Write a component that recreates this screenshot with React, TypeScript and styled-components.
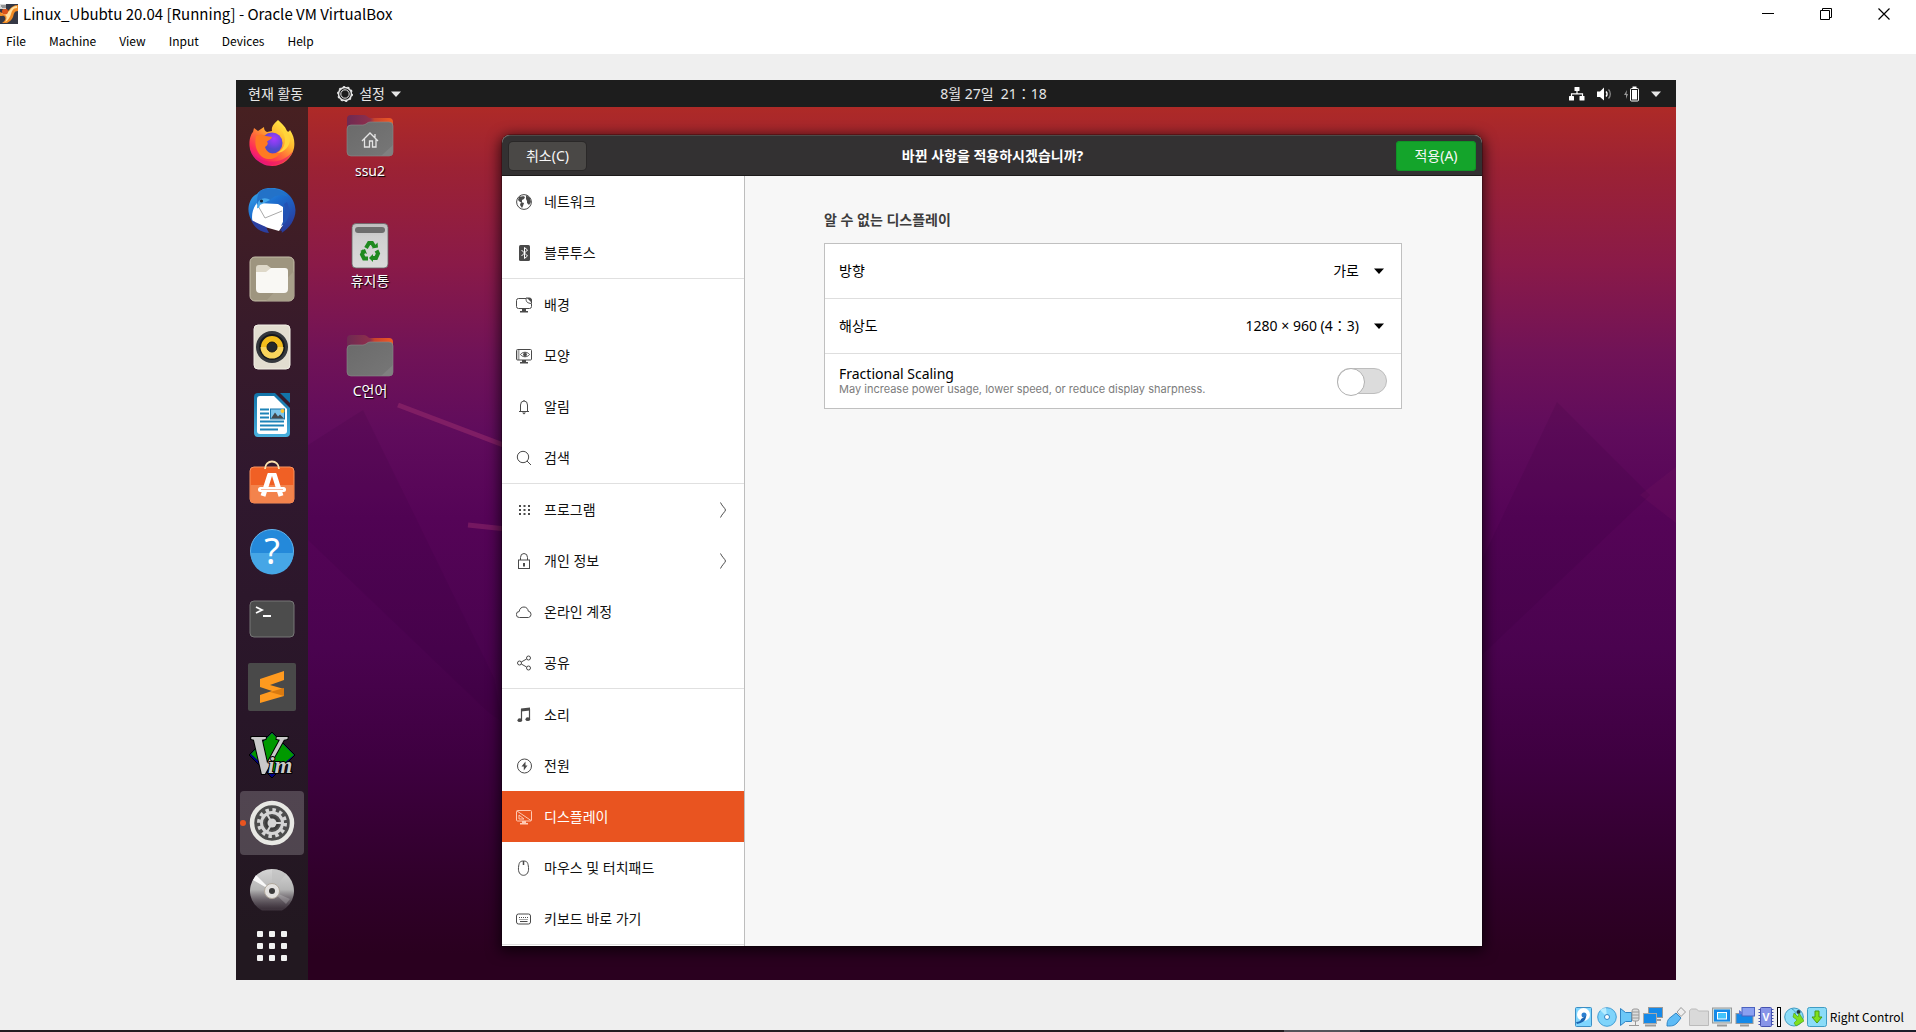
import React from "react";
import styled, { createGlobalStyle } from "styled-components";

const windowsFont = `"Noto Sans CJK KR", "Noto Sans", sans-serif`;
const guestFont = `"Noto Sans", "Noto Sans CJK KR", sans-serif`;

const GlobalStyle = createGlobalStyle`
  * { box-sizing: border-box; }
  body { margin: 0; background: #efefef; }
  button, select, input { font: inherit; color: inherit; margin: 0; }
  button { border: 0; padding: 0; background: none; }
  ul { list-style: none; margin: 0; padding: 0; }
  svg { display: block; flex: none; }
`;

/* ---------- host window ---------- */

const HostWindow = styled.div`
  min-height: 100vh;
  display: flex;
  flex-direction: column;
  background: #efefef;
  font-family: ${windowsFont};
  color: #000;
`;

const TitleBar = styled.header`
  display: flex;
  align-items: center;
  height: 28px;
  padding-right: 3px;
  background: #fff;
`;

const HostTitle = styled.h1`
  flex: 1;
  margin: 0;
  padding-left: 5px;
  font-size: 15px;
  line-height: 20px;
  font-weight: 400;
`;

const HostControl = styled.button`
  display: grid;
  place-items: center;
  width: 58px;
  height: 28px;
`;

const MenuBar = styled.nav`
  display: flex;
  align-items: center;
  gap: 23px;
  height: 26px;
  padding-left: 6px;
  background: #fff;
`;

const MenuButton = styled.button`
  font-size: 12px;
  line-height: 20px;
`;

const Viewport = styled.main`
  flex: 1;
  display: flex;
  padding: 26px 240px 24px 236px;
`;

const StatusBar = styled.footer`
  display: flex;
  align-items: center;
  justify-content: flex-end;
  gap: 3px;
  height: 26px;
  padding-right: 12px;
  font-size: 12px;
  line-height: 20px;
`;

const StatusSeparator = styled.span`
  width: 4px;
  height: 20px;
  border: 1px solid #000;
  background: #fff;
`;

const TaskbarEdge = styled.div`
  height: 2px;
  background: linear-gradient(90deg, #231d20 0 67%, #55535a 67% 71%, #1e1e2a 71%);
`;

/* ---------- guest desktop ---------- */

const Guest = styled.section`
  flex: 1;
  display: flex;
  flex-direction: column;
  min-width: 0;
  font-family: ${guestFont};
  font-size: 14px;
  line-height: 20px;
`;

const TopBar = styled.div`
  display: grid;
  grid-template-columns: 1fr auto 1fr;
  align-items: center;
  height: 27px;
  padding: 0 15px 0 12px;
  background: #1d1d1d;
  color: #e6e6e6;
`;

const TopGroup = styled.div<{ $end?: boolean }>`
  display: flex;
  align-items: center;
  gap: ${(p) => (p.$end ? "12px" : "34px")};
  justify-content: ${(p) => (p.$end ? "flex-end" : "flex-start")};
`;

const TopButton = styled.button`
  display: flex;
  align-items: center;
  gap: 6px;
`;

const Clock = styled.time`
  padding-left: 78px;
  white-space: pre;
`;

const Workspace = styled.div`
  position: relative;
  flex: 1;
  display: flex;
  background: linear-gradient(
    #ae2a27 0%, #9c2234 7%, #8a1a48 18%, #711357 28%, #600c5c 37%,
    #550457 47%, #4a034f 62%, #3e0040 75%, #30002a 89%, #2a001f 97%
  );
`;

const Wallpaper = styled.svg`
  position: absolute;
  inset: 0;
  width: 100%;
  height: 100%;
`;

const Dock = styled.nav`
  position: relative;
  display: flex;
  flex-direction: column;
  align-items: center;
  width: 72px;
  padding-top: 2px;
  background: linear-gradient(#472021 0%, #381b2a 25%, #30182e 42%, #281628 70%, #221820 95%);
`;

const DockSlot = styled.button<{ $short?: boolean }>`
  display: grid;
  place-items: center;
  width: 72px;
  height: ${(p) => (p.$short ? "42px" : "68px")};
`;

const DockTile = styled.span<{ $active?: boolean }>`
  position: relative;
  display: grid;
  place-items: center;
  width: 64px;
  height: 64px;
  border-radius: 4px;
  background: ${(p) => (p.$active ? "rgba(255, 255, 255, 0.2)" : "none")};
  &::before {
    content: "";
    display: ${(p) => (p.$active ? "block" : "none")};
    position: absolute;
    left: 0;
    width: 6px;
    height: 6px;
    border-radius: 50%;
    background: #e95420;
  }
`;

const DesktopIcons = styled.ul`
  position: relative;
  display: flex;
  flex-direction: column;
  gap: 40px;
  width: 124px;
  padding-top: 5px;
`;

const DesktopIcon = styled.li`
  display: flex;
  flex-direction: column;
  align-items: center;
  line-height: 22px;
  color: #fff;
  text-shadow: 1px 1px 1px #000;
`;

/* ---------- settings window ---------- */

const SettingsWindow = styled.section`
  position: absolute;
  inset: 28px 194px 34px 266px;
  display: flex;
  flex-direction: column;
  border-radius: 8px 8px 0 0;
  box-shadow: 0 3px 14px 2px rgba(0, 0, 0, 0.7), 0 0 0 1px rgba(0, 0, 0, 0.25);
  background: #f7f7f7;
`;

const SettingsHeader = styled.header`
  display: grid;
  grid-template-columns: 1fr auto 1fr;
  align-items: center;
  height: 41px;
  padding: 0 6px 0 7px;
  border-top: 1px solid #4c4a48;
  border-bottom: 1px solid #1c1a1a;
  border-radius: 8px 8px 0 0;
  background: #333132;
`;

const SettingsTitle = styled.h2`
  margin: 0;
  font-size: 14px;
  line-height: 20px;
  font-weight: 700;
  color: #fff;
`;

const HeaderButton = styled.button<{ $primary?: boolean }>`
  justify-self: ${(p) => (p.$primary ? "end" : "start")};
  height: ${(p) => (p.$primary ? "30px" : "28px")};
  min-width: ${(p) => (p.$primary ? "80px" : "77px")};
  padding: 0 12px;
  border-radius: 4px;
  color: #f7f7f7;
  background: ${(p) => (p.$primary ? "#14a42b" : "#4a4846")};
  box-shadow: ${(p) => (p.$primary ? "inset 0 0 0 1px #0f9426" : "0 0 0 1px #2a2828")};
`;

const SettingsBody = styled.div`
  flex: 1;
  display: grid;
  grid-template-columns: 243px 1fr;
`;

const Sidebar = styled.nav`
  border-right: 1px solid #bdbdbd;
  background: #fff;
`;

const SideGroup = styled.ul`
  border-bottom: 1px solid #e0e0e0;
`;

const SideItem = styled.button<{ $selected?: boolean }>`
  display: flex;
  align-items: center;
  gap: 12px;
  width: 100%;
  height: 51px;
  padding: 0 17px 0 14px;
  text-align: left;
  color: ${(p) => (p.$selected ? "#fff" : "#111")};
  background: ${(p) => (p.$selected ? "#e95420" : "#fff")};
  svg { color: ${(p) => (p.$selected ? "#ffc9b3" : "#4a4a4a")}; }
`;

const SideLabel = styled.span`
  flex: 1;
`;

const Content = styled.div`
  padding: 34px 80px 34px 79px;
`;

const SectionTitle = styled.h3`
  margin: 0 0 13px;
  font-size: 14px;
  line-height: 20px;
  font-weight: 700;
  color: #3d3d3d;
`;

const Panel = styled.div`
  border: 1px solid #c0c0c0;
  background: #fff;
`;

const PanelRow = styled.div`
  display: flex;
  align-items: center;
  justify-content: space-between;
  height: 55px;
  padding: 0 14px;
  color: #000;
  border-bottom: 1px solid #dedede;
  &:last-child {
    height: 54px;
    border-bottom: 0;
  }
`;

const SelectBox = styled.span`
  display: flex;
  align-items: center;
  gap: 15px;
  padding-right: 3px;
`;

const Select = styled.select`
  appearance: none;
  field-sizing: content;
  border: 0;
  padding: 0;
  background: none;
  text-align: right;
`;

const RowLabel = styled.label`
  display: flex;
  flex-direction: column;
  line-height: 16px;
`;

const Hint = styled.small`
  font-family: Inter, "Noto Sans", sans-serif;
  font-size: 11px;
  line-height: 14px;
  color: #7c7c7c;
`;

const Switch = styled.input`
  appearance: none;
  width: 50px;
  height: 26px;
  border: 1px solid #bdbdbd;
  border-radius: 13px;
  background: #dcdcdc;
  &::before {
    content: "";
    display: block;
    width: 26px;
    height: 26px;
    margin: -1px;
    border: 1px solid #b0b0b0;
    border-radius: 50%;
    background: #fff;
  }
  &:checked { background: #14a42b; }
  &:checked::before { margin-left: 23px; }
`;

/* ---------- drawings ---------- */

const Caret = ({ size = 10 }: { size?: number }) => (
  <svg width={size} height="6" viewBox="0 0 10 6"><path d="M0 0.5h10L5 6z" fill="currentColor" /></svg>
);

const VBoxLogo = () => (
  <svg width="18" height="20" viewBox="0 0 18 20">
    <rect width="18" height="20" fill="#353845" />
    <path d="M0 8c3 2 7 1 9-2s5-5 9-5v6c-4 0-4 3-5 6s-4 5-6 6H2c3-2 4-4 3-6S2 12 0 12z" fill="#f08a24" />
    <path d="M1 9c4 1 7 0 9-3s4-4 7-4v2c-4 0-5 3-6 6s-3 7-6 8c2-3 2-6 0-7z" fill="#ffe0a0" />
    <circle cx="5" cy="7.500" r="3" fill="#d9541c" />
    <rect width="6" height="5" fill="#d8d8d8" />
    <path d="M1 2h1M3 1v3M5 1v3" stroke="#555" />
  </svg>
);

const GearOutline = () => (
  <svg width="16" height="16" viewBox="0 0 16 16" fill="none" stroke="#e6e6e6">
    <circle cx="8" cy="8" r="6.500" strokeWidth="1.500" />
    <circle cx="8" cy="8" r="4.200" />
    <circle cx="8" cy="8" r="7.300" strokeDasharray="2 2.587" strokeWidth="1.400" />
  </svg>
);

const NetworkTray = () => (
  <svg width="16" height="14" viewBox="0 0 16 14" fill="#fff">
    <rect x="5.500" y="0" width="5" height="4" rx="0.500" />
    <rect x="0" y="9" width="5" height="4.500" rx="0.500" />
    <rect x="10.500" y="9" width="5" height="4.500" rx="0.500" />
    <path d="M8 4v3M2.500 9.500V6.800h11v2.700" fill="none" stroke="#fff" strokeWidth="1.200" />
  </svg>
);

const VolumeTray = () => (
  <svg width="15" height="14" viewBox="0 0 15 14">
    <path d="M0 4.500h3L7 0.500v13L3 10H0z" fill="#fff" />
    <path d="M9 4.500a3.500 3.500 0 0 1 0 5" fill="none" stroke="#fff" strokeWidth="1.400" />
    <path d="M11.500 2.500a6.500 6.500 0 0 1 0 9" fill="none" stroke="#888" strokeWidth="1.300" />
  </svg>
);

const BatteryTray = () => (
  <svg width="15" height="16" viewBox="0 0 15 16">
    <path d="M3 4L0 9h2v4l2-5H2.500z" fill="#999" />
    <rect x="6.500" y="2.500" width="8" height="12.500" rx="1" fill="none" stroke="#fff" />
    <rect x="8.500" y="0.500" width="4" height="2" fill="#fff" />
    <rect x="8" y="4" width="5" height="9.500" fill="#fff" />
  </svg>
);

const Folder = ({ home = false }: { home?: boolean }) => (
  <svg width="48" height="48" viewBox="0 0 48 48">
    <defs>
      <linearGradient id="tab"><stop offset="0" stopColor="#6e2a52" /><stop offset="0.500" stopColor="#8e2f4c" /><stop offset="0.600" stopColor="#c7432e" /><stop offset="1" stopColor="#f05a24" /></linearGradient>
      <linearGradient id="front" x2="1" y2="1"><stop offset="0" stopColor="#6a6a6a" /><stop offset="1" stopColor="#777" /></linearGradient>
    </defs>
    <path d="M1 7a4 4 0 0 1 4-4h13c3 0 4 3 6 3h19a4 4 0 0 1 4 4v20H1z" fill="url(#tab)" />
    <path d="M1 17a4 4 0 0 1 4-4h12c3 0 4-3 7-3h19a4 4 0 0 1 4 4v26a4 4 0 0 1-4 4H5a4 4 0 0 1-4-4z" fill="url(#front)" stroke="#8c8c8c" strokeWidth="0.600" />
    <path d="M47 33v7a4 4 0 0 1-4 4H35z" fill="#808080" />
    {home && <path d="M16 29l8-8 8 8M18.500 27v8h5v-6h3v6h3.500v-8M29 22v4" fill="none" stroke="#e4e4e4" strokeWidth="1.300" />}
  </svg>
);

const Trash = () => (
  <svg width="48" height="48" viewBox="0 0 48 48">
    <defs><linearGradient id="bin" x2="0" y2="1"><stop offset="0" stopColor="#bdbdbd" /><stop offset="0.300" stopColor="#d0d0d0" /><stop offset="1" stopColor="#dadada" /></linearGradient></defs>
    <rect x="6" y="1.500" width="36" height="44.500" rx="4" fill="url(#bin)" stroke="#666" strokeWidth="0.800" />
    <rect x="9" y="5" width="30" height="6" rx="3" fill="#6e6e6e" />
    <g fill="none" stroke="#1f8a1f" strokeWidth="4">
      <path d="M20 26l3-5h3l2.500 4" />
      <path d="M30.500 28.500l1.500 3-2 4.500h-4" />
      <path d="M22 36.500h-4l-2-4 2-4" />
    </g>
    <path d="M26 26.500l6-1-.5-5zM27 32v8l-4-4zM14 29l5-2 2 5z" fill="#1f8a1f" />
  </svg>
);

const Firefox = () => (
  <svg width="48" height="48" viewBox="0 0 48 48">
    <defs>
      <linearGradient id="ff" x1="0.900" y1="0.100" x2="0.250" y2="0.950"><stop offset="0" stopColor="#fff14a" /><stop offset="0.350" stopColor="#ffb52e" /><stop offset="0.600" stopColor="#ff6a3a" /><stop offset="0.850" stopColor="#ff2b58" /><stop offset="1" stopColor="#e31587" /></linearGradient>
      <radialGradient id="ffc" cx="0.600" cy="0.300"><stop offset="0" stopColor="#a63bff" /><stop offset="0.600" stopColor="#7542e5" /><stop offset="1" stopColor="#4f4ac8" /></radialGradient>
    </defs>
    <path d="M30 1c3 3 7 6 9 11 1 1 2 1 3-1 4 6 5 12 4 18-2 10-11 18-22 18S2 38 1.500 27C1 20 3 15 5 13l1-4 4 3 6-4c0 3 1 4 3 5l5-1c-1-5 3-8 6-11z" fill="url(#ff)" />
    <circle cx="24" cy="24" r="10.500" fill="url(#ffc)" />
    <path d="M8 17c4-2 7-2 10 0l6 1c-1 3-4 3-5 5 2 1 0 4-2 5 2 7 10 9 16 4-3 9-17 12-23 1-3-5-3-11-2-16z" fill="#ff7a22" />
    <path d="M29 4c1 5 8 8 8 17 0 7-4 11-8 13 8-1 13-7 13-14-1-7-9-10-13-16z" fill="#ffd43a" />
    <path d="M3 32c6 12 31 16 42 0-4 9-12 14-21 14S7 41 3 32z" fill="#e8186d" opacity="0.600" />
  </svg>
);

const Thunderbird = () => (
  <svg width="48" height="48" viewBox="0 0 48 48">
    <defs><linearGradient id="tb" x2="0.700" y2="1"><stop offset="0" stopColor="#3fb0ee" /><stop offset="0.450" stopColor="#1c6fd0" /><stop offset="1" stopColor="#283a9c" /></linearGradient></defs>
    <path d="M22 1c15-1 25 10 25.500 22 0 10-6 18-14 23 1-2 0-3-2-2l3-4L8 38c-5-4-8-10-7.500-17C1 15 4 9 9 7c3-4 8-6 13-6z" fill="url(#tb)" />
    <path d="M9 16c-5 6-6 15-4 19 3 2 4 0 5 3l21 6 4-6V20l-5-3z" fill="#fff" />
    <path d="M9 17l8 14 17-7" fill="none" stroke="#aaa" />
    <path d="M12 4c8-5 22-3 28 6-6-3-14-2-18 3-4 0-9 1-13 5 0-5 0-10 3-14z" fill="#2372c8" />
    <path d="M10 15c4-5 9-4 12-2l-10 5c-1 4-3 4-3 2z" fill="#45a8ec" />
    <path d="M36 17c3 7 1 15-3 22 9-5 10-15 6-24z" fill="#2352b4" />
    <path d="M3 33c4 9 10 12 18 13l-3-6z" fill="#2b3fa0" />
    <circle cx="13.500" cy="14" r="1.600" fill="#123" />
  </svg>
);

const Files = () => (
  <svg width="48" height="48" viewBox="0 0 48 48">
    <rect x="2" y="2" width="44" height="44" rx="5" fill="#9e957f" stroke="#c4bda8" />
    <path d="M46 16v25a5 5 0 0 1-5 5H18z" fill="#a8a08a" />
    <path d="M8 13a3 3 0 0 1 3-3h8l4 3v8H8z" fill="#ded8c8" />
    <path d="M8 17h10l5-4h14a3 3 0 0 1 3 3v18a4 4 0 0 1-4 4H12a4 4 0 0 1-4-4z" fill="#f9f8f4" />
  </svg>
);

const Rhythmbox = () => (
  <svg width="48" height="48" viewBox="0 0 48 48">
    <rect x="6" y="2" width="36" height="44" rx="4" fill="#e2ddd0" stroke="#f2efe6" />
    <circle cx="24" cy="24" r="16" fill="#34373c" />
    <circle cx="24" cy="24" r="12" fill="#f3bd1c" stroke="#17191c" strokeWidth="2" />
    <path d="M12.500 24a11.500 11.500 0 0 0 23 0z" fill="#f8d45c" />
    <circle cx="24" cy="24" r="5" fill="#24272b" stroke="#141414" />
  </svg>
);

const Writer = () => (
  <svg width="48" height="48" viewBox="0 0 48 48">
    <defs><linearGradient id="lo" x2="0" y2="1"><stop offset="0" stopColor="#1273a8" /><stop offset="1" stopColor="#48b0dd" /></linearGradient></defs>
    <path d="M6 6a4 4 0 0 1 4-4h17l15 15v25a4 4 0 0 1-4 4H10a4 4 0 0 1-4-4z" fill="url(#lo)" />
    <path d="M32 2h10v10z" fill="#1273a8" />
    <path d="M9 8a3 3 0 0 1 3-3h14l13 13v22a3 3 0 0 1-3 3H12a3 3 0 0 1-3-3z" fill="#fff" />
    <path d="M12 18.500h9M12 22.500h9M12 26.500h9M12 30.500h24M12 34.500h24M12 38.500h18" stroke="#1d83b8" strokeWidth="1.800" />
    <rect x="22.500" y="18" width="14" height="10" fill="#7dc4ea" stroke="#1b78ae" />
    <path d="M23 27.500l4-6 3 4 2-2 4 4z" fill="#44484c" /><circle cx="34.500" cy="20" r="2" fill="#ffc52d" />
  </svg>
);

const Software = () => (
  <svg width="48" height="48" viewBox="0 0 48 48">
    <rect x="2" y="8" width="44" height="36" rx="4" fill="#f06025" stroke="#f9925f" />
    <path d="M2.500 26h43v14a4 4 0 0 1-4 4h-35a4 4 0 0 1-4-4z" fill="#f3834c" />
    <path d="M17 10c0-10 14-10 14 0" fill="none" stroke="#fbe2ad" strokeWidth="1.800" />
    <path d="M22 15L15 37M26 15l7 22" stroke="#fff" strokeWidth="5" />
    <path d="M20 15h8" stroke="#fff" strokeWidth="2" />
    <path d="M12.500 30.500h23" stroke="#fff" strokeWidth="5" strokeLinecap="round" />
    <path d="M13 30.500h22" stroke="#f6b9a0" strokeWidth="1" />
  </svg>
);

const HelpIcon = () => (
  <svg width="48" height="48" viewBox="0 0 48 48">
    <circle cx="24" cy="24" r="21.500" fill="#2489da" stroke="#63b4ee" />
    <path d="M2.500 26h43a21.500 21.500 0 0 1-43 0z" fill="#46a6e6" />
    <text x="24" y="37" textAnchor="middle" fontSize="36" fontFamily="Noto Sans, sans-serif" fill="#fff">?</text>
  </svg>
);

const Terminal = () => (
  <svg width="48" height="48" viewBox="0 0 48 48">
    <rect x="2" y="6" width="44" height="36" rx="4" fill="#4c4c4c" stroke="#777" />
    <path d="M8 12l6 3-6 3M15 21h8" fill="none" stroke="#fff" strokeWidth="1.800" />
  </svg>
);

const Sublime = () => (
  <svg width="48" height="48" viewBox="0 0 48 48">
    <rect width="48" height="48" rx="2" fill="#494949" />
    <path d="M12 16l24-8v9l-14 5 14 4v7l-24 7v-8l12-4-12-4z" fill="#ff9a1f" />
    <path d="M22 29l14-4v8z" fill="#d97a10" />
  </svg>
);

const Vim = () => (
  <svg width="48" height="48" viewBox="0 0 48 48">
    <path d="M24 1l23 23-23 23L1 24z" fill="#000080" stroke="#000" />
    <path d="M24 2l22 22-22 18L3 23z" fill="#009900" />
    <text x="0" y="42" fontFamily="Liberation Serif, serif" fontWeight="700" fontStyle="italic" fontSize="54" fill="#c9c9c9" stroke="#000" strokeWidth="2" paintOrder="stroke">
      V<tspan dx="-16" fontSize="23">im</tspan>
    </text>
  </svg>
);

const SettingsGear = () => (
  <svg width="48" height="48" viewBox="0 0 48 48">
    <circle cx="24" cy="24" r="20" fill="#4d4d4d" stroke="#e8e8e4" strokeWidth="4.500" />
    <circle cx="24" cy="24" r="13" fill="none" stroke="#d5d5d5" strokeWidth="4" strokeDasharray="3.400 3.407" />
    <circle cx="24" cy="24" r="10.500" fill="#4d4d4d" stroke="#d5d5d5" strokeWidth="3" />
    <circle cx="24" cy="24" r="5.500" fill="none" stroke="#3c3c3c" strokeWidth="3" />
    <circle cx="24" cy="24" r="4.500" fill="#d5d5d5" />
    <path d="M24 24h10M24 24l-5-9M24 24l-5 9" stroke="#d5d5d5" strokeWidth="2" />
  </svg>
);

const Disc = () => (
  <svg width="48" height="48" viewBox="0 0 48 48">
    <defs>
      <linearGradient id="cd" x2="0" y2="1"><stop offset="0" stopColor="#d6d6d6" /><stop offset="0.500" stopColor="#b4b4b4" /><stop offset="0.950" stopColor="#5a505a" stopOpacity="0.500" /></linearGradient>
    </defs>
    <path d="M14 43.500A22 22 0 1 1 34 43.500z" fill="url(#cd)" />
    <path d="M24 24L5 13l3-5z" fill="#fff" opacity="0.900" /><path d="M24 24l18 8-4 5z" fill="#fff" opacity="0.200" />
    <path d="M24 24V2a22 22 0 0 1 14 5z" fill="#bbb" opacity="0.500" />
    <circle cx="24" cy="24" r="7.500" fill="#e4e2e0" stroke="#b0a89c" />
    <circle cx="24" cy="24" r="3" fill="#3b3b3b" />
  </svg>
);

const AppGrid = () => (
  <svg width="30" height="30" viewBox="0 0 30 30" fill="#f2f2f2">
    {[0, 12, 24].map((y) => [0, 12, 24].map((x) => <rect key={`${x}-${y}`} x={x} y={y} width="6" height="6" rx="1" />))}
  </svg>
);

const sideDrawings: Record<string, React.ReactNode> = {
  globe: <><circle cx="8" cy="8" r="7.400" /><path d="M3 3c2-1 3 0 4-1l2 1-1 2-2 1v2H4L2 6zM5 8l3 1-1 3-1 2-2-3zM10 1l4 3 1 4-2 3-2-2V7l-1-2z" fill="currentColor" stroke="none" /></>,
  bluetooth: <><rect x="3" y="0" width="11" height="16" rx="1.500" fill="currentColor" stroke="none" /><path d="M5.500 5l6 6-3 2.500v-11l3 2.500-6 6" stroke="#fff" /></>,
  background: <><path d="M10 1.500H2.500a2 2 0 0 0-2 2v6a2 2 0 0 0 2 2h11a2 2 0 0 0 2-2V7" /><path d="M10 1c0 4 1 5 5.500 5.500V3a2 2 0 0 0-2-2z" /><path d="M11 1l4.500 4.500V3a2 2 0 0 0-2-2zM6 12h4v2h2v1.500H4V14h2z" fill="currentColor" stroke="none" /></>,
  look: <><rect x="0.500" y="1.500" width="15" height="10.500" rx="1" /><path d="M1.500 3h2M1.500 5h2M1.500 7h2M1.500 9h2M1.500 11h2" strokeWidth="1.200" /><path d="M4.500 6.500c2-3 7-3 9 0-2 3-7 3-9 0z" /><circle cx="9" cy="6.500" r="1.500" fill="currentColor" /><path d="M6 12h4v2h2v1.500H4V14h2z" fill="currentColor" stroke="none" /></>,
  bell: <><path d="M4.500 12V6a3.500 4 0 0 1 7 0v6M3 12.500h10M8 2V1" /><path d="M6 13.500h4l-2 2z" fill="currentColor" stroke="none" /></>,
  search: <><circle cx="7" cy="7" r="5.700" /><path d="M11 11l4 4" /></>,
  apps: <g fill="currentColor" stroke="none">{[3, 7, 11].map((y) => [3, 7.500, 12].map((x) => <rect key={`${x}-${y}`} x={x} y={y} width="2" height="2" />))}</g>,
  lock: <><path d="M4.500 7V4.500a3.500 4 0 0 1 7 0V7" /><rect x="2.500" y="7" width="11" height="8.500" /><path d="M8 10v3.500" strokeWidth="2" /></>,
  cloud: <path d="M3.500 13.500a3 3 0 0 1-.3-6C3.500 4.500 5.500 3 8 3s4 2 4.300 4.200A3.200 3.200 0 0 1 12.500 13.500z" />,
  share: <><circle cx="3.500" cy="8" r="2" /><circle cx="12.500" cy="3" r="2" /><circle cx="12.500" cy="13" r="2" /><path d="M5.300 7l5.300-3M5.300 9l5.300 3" /></>,
  music: <><path d="M5.500 13V2.500h8V12" strokeWidth="1.200" /><path d="M5 1.500L14 0.500v3L5 4.500z" fill="currentColor" stroke="none" /><ellipse cx="3.800" cy="13.200" rx="2.300" ry="1.900" fill="currentColor" stroke="none" /><ellipse cx="11.800" cy="12.200" rx="2.300" ry="1.900" fill="currentColor" stroke="none" /></>,
  power: <><circle cx="8.500" cy="8" r="7" /><path d="M9.500 3.500L5.500 8.500h2.300v4l3.700-5H9.500z" fill="currentColor" stroke="none" /></>,
  display: <><rect x="0.500" y="1.500" width="15" height="10.500" rx="1" /><path d="M1 2l14 9.500M3 6v4h5z" /><path d="M6 12h4v2h2v1.500H4V14h2z" fill="currentColor" stroke="none" /></>,
  mouse: <><path d="M7.500 1C3.500 1 3 3 2.500 7.500S4 15.300 7.500 15.300 13 12 12.500 7.500 11.500 1 7.500 1z" /><path d="M7.500 1v4" strokeWidth="1.500" /></>,
  keyboard: <><rect x="0.500" y="3" width="14" height="10" rx="2" /><path d="M3 6.500h9.500M3.500 8.500H12" strokeDasharray="1 1" /><path d="M4 10.500h7.500" /></>,
};

const SideIcon = ({ name }: { name: string }) => (
  <svg width="16" height="16" viewBox="0 0 16 16" fill="none" stroke="currentColor" strokeWidth="1">{sideDrawings[name]}</svg>
);

const Chevron = () => (
  <svg width="8" height="16" viewBox="0 0 8 16" fill="none" stroke="currentColor" strokeWidth="1"><path d="M1.500 0.500C3 4 6 6 6.500 8 6 10 3 12 1.500 15.500" /></svg>
);

/* ---------- status bar drawings ---------- */

const statusDrawings: { name: string; width?: number; art: React.ReactNode }[] = [
  { name: "Hard disks", art: <><rect x="1.500" y="0.500" width="16" height="19" rx="1" fill="#7fd6ff" stroke="#3c8ec4" /><circle cx="9.500" cy="7.500" r="6.500" fill="#fff" /><circle cx="10" cy="8" r="2.500" fill="#2b7fd0" /><path d="M12 9c0 5-4 7-9 8l-1-2c3 0 5-1 5-3" fill="#1c64b0" /></> },
  { name: "Optical drives", art: <><circle cx="10" cy="10" r="9.300" fill="#7fd4fb" stroke="#3f9cd4" /><path d="M10 10L3 3a10 10 0 0 1 6-2z" fill="#b8ecff" /><circle cx="10" cy="10" r="2.500" fill="#fff" stroke="#2f84c4" /></> },
  { name: "Audio", art: <><path d="M0.500 1.500l5 4h6v9h-6l-5 4z" fill="#6cc8f8" stroke="#2f84c4" /><rect x="12" y="2" width="7" height="12" rx="2" fill="#ddd" stroke="#999" /><path d="M12 5h7M12 8h7M12 11h7M15.500 14v4M9 18.500h10" stroke="#999" /></> },
  { name: "Network", art: <><rect x="5.500" y="0.500" width="14" height="10" fill="#1589e8" stroke="#9a9a9a" /><path d="M10 13h8" stroke="#9a9a9a" strokeWidth="2" /><rect x="0.500" y="6.500" width="13" height="10" fill="#1589e8" stroke="#aaa" /><path d="M2 18.500h11" stroke="#9a9a9a" strokeWidth="2" /></> },
  { name: "USB", art: <><path d="M1 19c0-5 1-7 4-9l5-4 5 5-4 5c-3 3-5 3-10 3z" fill="#5fbcf6" stroke="#2f84c4" /><path d="M11 5l4-4.500 4.500 4.500L15 9.500z" fill="#eee" stroke="#999" /></> },
  { name: "Shared folders", art: <path d="M0.500 18.500v-15l2-1.500h5l2 2h10v14.500z" fill="#d9d9d9" stroke="#bbb" /> },
  { name: "Display", art: <><rect x="0.500" y="1" width="19" height="15" fill="#cdd" stroke="#999" /><rect x="2" y="2.500" width="16" height="12" fill="#1589e8" /><rect x="5.500" y="5.500" width="9" height="6.500" fill="#42c4fc" stroke="#fff" /><path d="M5 18.500h10" stroke="#999" strokeWidth="2" /></> },
  { name: "Recording", art: <><rect x="1" y="6.500" width="17" height="10" fill="#1589e8" stroke="#999" /><path d="M5 18.500h9" stroke="#999" strokeWidth="2" /><rect x="7" y="0.500" width="12.500" height="8.500" fill="#8ba0f0" stroke="#4b62c0" /><path d="M4 3l3 2v2L4 8z" fill="#6479d8" /></> },
  { name: "Processor", width: 16, art: <><rect x="2.500" y="0.500" width="11" height="19" rx="1" fill="#8794e8" stroke="#4653b0" /><path d="M1.500 2v17M14.500 2v17" stroke="#4653b0" strokeDasharray="1 2" strokeWidth="2" /><text x="8" y="14" textAnchor="middle" fontSize="11" fontWeight="700" fontFamily="Liberation Sans, sans-serif" fill="#fff">V</text></> },
];

const hostKeys = [
  { name: "Mouse integration", art: <><ellipse cx="10" cy="10" rx="9.300" ry="9" fill="#8adcf8" stroke="#3f9cc4" /><path d="M8 2c4 2 4 5 3 8" fill="none" stroke="#3f9cc4" /><circle cx="14.500" cy="5" r="2" fill="#234" /><path d="M10 6l4 4 1-4 5 8-8 5-2-3 3-3-4-3z" fill="#7ee01c" stroke="#4a9a10" strokeWidth="0.600" /></> },
  { name: "Keyboard capture", art: <><rect x="0.500" y="0.500" width="19" height="19" rx="2" fill="#8adcf8" stroke="#3f9cc4" /><path d="M8 4h4v6h3l-5 6-5-6h3z" fill="#7ee01c" stroke="#4a9a10" /></> },
];

/* ---------- data ---------- */

const menus = ["File", "Machine", "View", "Input", "Devices", "Help"];

const dockApps = [
  { name: "Firefox", icon: <Firefox /> },
  { name: "Thunderbird", icon: <Thunderbird /> },
  { name: "Files", icon: <Files /> },
  { name: "Rhythmbox", icon: <Rhythmbox /> },
  { name: "Writer", icon: <Writer /> },
  { name: "Software", icon: <Software /> },
  { name: "Help", icon: <HelpIcon /> },
  { name: "Terminal", icon: <Terminal /> },
  { name: "Sublime Text", icon: <Sublime /> },
  { name: "Vim", icon: <Vim /> },
  { name: "Settings", icon: <SettingsGear />, active: true },
  { name: "Disc", icon: <Disc /> },
];

type Entry = { icon: string; label: string; more?: boolean; selected?: boolean };
const sideGroups: Entry[][] = [
  [{ icon: "globe", label: "네트워크" }, { icon: "bluetooth", label: "블루투스" }],
  [
    { icon: "background", label: "배경" },
    { icon: "look", label: "모양" },
    { icon: "bell", label: "알림" },
    { icon: "search", label: "검색" },
  ],
  [
    { icon: "apps", label: "프로그램", more: true },
    { icon: "lock", label: "개인 정보", more: true },
    { icon: "cloud", label: "온라인 계정" },
    { icon: "share", label: "공유" },
  ],
  [
    { icon: "music", label: "소리" },
    { icon: "power", label: "전원" },
    { icon: "display", label: "디스플레이", selected: true },
    { icon: "mouse", label: "마우스 및 터치패드" },
    { icon: "keyboard", label: "키보드 바로 가기" },
  ],
];

/* ---------- sections ---------- */

const DesktopWallpaper = () => (
  <Wallpaper viewBox="0 0 1440 873" preserveAspectRatio="none" aria-hidden="true">
    <path d="M127 303L72 338v95l180 172 14 10-8-44z" fill="#2a0030" opacity="0.100" />
    <path d="M1321 295l93 93-168 160v-95z" fill="#2a0030" opacity="0.100" />
    <path d="M1440 360l-36 28 36 28z" fill="#9a2a70" opacity="0.100" />
    <path d="M162 298l108 41" stroke="#8a2468" strokeWidth="5" opacity="0.750" />
    <path d="M232 418l38 4" stroke="#8a2468" strokeWidth="5" opacity="0.600" />
  </Wallpaper>
);

const SettingsDialog = () => (
  <SettingsWindow>
    <SettingsHeader>
      <HeaderButton>취소(C)</HeaderButton>
      <SettingsTitle>바뀐 사항을 적용하시겠습니까?</SettingsTitle>
      <HeaderButton $primary>적용(A)</HeaderButton>
    </SettingsHeader>
    <SettingsBody>
      <Sidebar>
        {sideGroups.map((group) => (
          <SideGroup key={group[0].label}>
            {group.map((item) => (
              <li key={item.label}>
                <SideItem $selected={item.selected}>
                  <SideIcon name={item.icon} />
                  <SideLabel>{item.label}</SideLabel>
                  {item.more && <Chevron />}
                </SideItem>
              </li>
            ))}
          </SideGroup>
        ))}
      </Sidebar>
      <Content>
        <SectionTitle>알 수 없는 디스플레이</SectionTitle>
        <Panel>
          <PanelRow>
            <RowLabel htmlFor="orientation">방향</RowLabel>
            <SelectBox>
              <Select id="orientation"><option>가로</option></Select>
              <Caret />
            </SelectBox>
          </PanelRow>
          <PanelRow>
            <RowLabel htmlFor="resolution">해상도</RowLabel>
            <SelectBox>
              <Select id="resolution"><option>1280 × 960 (4：3)</option></Select>
              <Caret />
            </SelectBox>
          </PanelRow>
          <PanelRow>
            <RowLabel htmlFor="scaling">
              Fractional Scaling
              <Hint>May increase power usage, lower speed, or reduce display sharpness.</Hint>
            </RowLabel>
            <Switch id="scaling" type="checkbox" />
          </PanelRow>
        </Panel>
      </Content>
    </SettingsBody>
  </SettingsWindow>
);

export default function App() {
  return (
    <HostWindow>
      <GlobalStyle />
      <TitleBar>
        <VBoxLogo />
        <HostTitle>Linux_Ububtu 20.04 [Running] - Oracle VM VirtualBox</HostTitle>
        <HostControl aria-label="Minimize">
          <svg width="12" height="12" viewBox="0 0 12 12"><path d="M0 5.500h12" stroke="#000" /></svg>
        </HostControl>
        <HostControl aria-label="Restore">
          <svg width="12" height="12" viewBox="0 0 12 12" fill="none" stroke="#000"><path d="M0.500 2.500h9v9h-9zM2.500 2.500v-2h9v9h-2" /></svg>
        </HostControl>
        <HostControl aria-label="Close">
          <svg width="12" height="12" viewBox="0 0 12 12"><path d="M0.500 0.500l11 11M11.500 0.500l-11 11" stroke="#000" strokeWidth="1.200" /></svg>
        </HostControl>
      </TitleBar>
      <MenuBar>
        {menus.map((m) => <MenuButton key={m}>{m}</MenuButton>)}
      </MenuBar>
      <Viewport>
        <Guest>
          <TopBar>
            <TopGroup>
              <TopButton>현재 활동</TopButton>
              <TopButton><GearOutline />설정<Caret /></TopButton>
            </TopGroup>
            <Clock>8월 27일  21：18</Clock>
            <TopGroup $end>
              <NetworkTray />
              <VolumeTray />
              <BatteryTray />
              <Caret />
            </TopGroup>
          </TopBar>
          <Workspace>
            <DesktopWallpaper />
            <Dock>
              {dockApps.map((app) => (
                <DockSlot key={app.name} aria-label={app.name}>
                  <DockTile $active={app.active}>{app.icon}</DockTile>
                </DockSlot>
              ))}
              <DockSlot $short aria-label="Applications"><AppGrid /></DockSlot>
            </Dock>
            <DesktopIcons>
              <DesktopIcon><Folder home />ssu2</DesktopIcon>
              <DesktopIcon><Trash />휴지통</DesktopIcon>
              <DesktopIcon><Folder />C언어</DesktopIcon>
            </DesktopIcons>
            <SettingsDialog />
          </Workspace>
        </Guest>
      </Viewport>
      <StatusBar>
        {statusDrawings.map(({ name, width = 20, art }) => (
          <svg key={name} role="img" aria-label={name} width={width} height="20" viewBox={`0 0 ${width} 20`}>{art}</svg>
        ))}
        <StatusSeparator />
        {hostKeys.map(({ name, art }) => (
          <svg key={name} role="img" aria-label={name} width="20" height="20" viewBox="0 0 20 20">{art}</svg>
        ))}
        <span>Right Control</span>
      </StatusBar>
      <TaskbarEdge />
    </HostWindow>
  );
}
